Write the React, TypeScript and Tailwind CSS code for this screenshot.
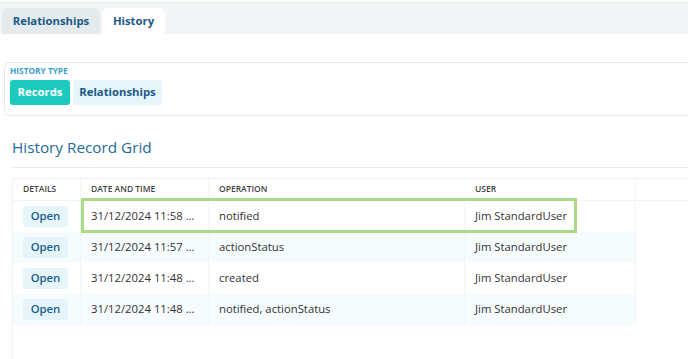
const rows = [
  { date: "31/12/2024 11:58 ...", op: "notified", user: "Jim StandardUser" },
  { date: "31/12/2024 11:57 ...", op: "actionStatus", user: "Jim StandardUser" },
  { date: "31/12/2024 11:48 ...", op: "created", user: "Jim StandardUser" },
  { date: "31/12/2024 11:48 ...", op: "notified, actionStatus", user: "Jim StandardUser" },
];

export default function App() {
  return (
    <div className="w-[688px] h-[359px] bg-white overflow-hidden font-['Open_Sans',sans-serif] text-[#333]">
      {/* tabs */}
      <div className="mt-[2px] h-[32px] bg-[#f1f5f6] border-t border-[#e6ebed] flex items-end pl-[2px] gap-[2px]">
        <div className="h-[26px] w-[98px] rounded-t-md bg-[#e5eaed] flex items-center justify-center text-[11.3px] font-bold text-[#1b5a88]">
          Relationships
        </div>
        <div className="h-[26px] w-[63px] rounded-t-md bg-white flex items-center justify-center text-[11.3px] font-bold text-[#1b5a88]">
          History
        </div>
      </div>

      {/* history type */}
      <div className="mt-[28px] ml-[4px] h-[54px] border border-r-0 border-[#e7eaeb] rounded-l-md pl-[5px] pt-[2px]">
        <div className="text-[8.3px] font-bold text-[#3a9dcf] leading-[12px]">HISTORY TYPE</div>
        <div className="flex gap-[3px] mt-[3px]">
          <div className="h-[25px] w-[60px] rounded-[3px] bg-[#1ccabd] text-white text-[11.3px] font-bold flex items-center justify-center">
            Records
          </div>
          <div className="h-[25px] w-[89px] rounded-[3px] bg-[#e7f6fa] text-[#1b5a88] text-[11.3px] font-bold flex items-center justify-center">
            Relationships
          </div>
        </div>
      </div>

      {/* grid */}
      <div className="ml-[12px]">
        <h2 className="mt-[19px] text-[15.3px] leading-[24px] text-[#1d6b98]">History Record Grid</h2>
        <div className="mt-[8px] border-t border-[#e8eaeb]" />
        <div className="mt-[10px] border-t border-l border-[#eef1f3] h-[200px]">
          <div className="flex h-[22px] border-b border-[#f0f3f5] text-[8.5px] font-semibold text-[#444] items-center">
            <div className="w-[68px] pl-[10px] h-full flex items-center border-r border-[#f2f5f7]">DETAILS</div>
            <div className="w-[128px] pl-[10px] h-full flex items-center border-r border-[#f2f5f7]">DATE AND TIME</div>
            <div className="w-[256px] pl-[10px] h-full flex items-center">OPERATION</div>
            <div className="w-[171px] pl-[10px] h-full flex items-center border-r border-[#f2f5f7]">USER</div>
          </div>
          <div className="relative w-[623px]">
            {rows.map((r, i) => (
              <div
                key={i}
                className={`flex h-[31px] items-center text-[11.3px] whitespace-nowrap ${i % 2 === 1 ? "bg-[#f6fbfd]" : "bg-white"}`}
              >
                <div className="w-[68px] h-full flex items-center pl-[10px] border-r border-[#f0f5f8]">
                  <div className="h-[21px] w-[45px] rounded-[3px] bg-[#e5f5fa] text-[#1b5e8e] font-semibold flex items-center justify-center">
                    Open
                  </div>
                </div>
                <div className="w-[128px] h-full flex items-center pl-[10px] border-r border-[#f0f5f8]">{r.date}</div>
                <div className="w-[256px] h-full flex items-center pl-[10px] border-r border-[#f0f5f8]">{r.op}</div>
                <div className="w-[171px] h-full flex items-center pl-[10px] border-r border-[#f0f5f8]">{r.user}</div>
              </div>
            ))}
            <div className="absolute left-[68px] top-[-3px] w-[496px] h-[35px] border-[3px] border-[#a9db85]" />
          </div>
        </div>
      </div>
    </div>
  );
}
